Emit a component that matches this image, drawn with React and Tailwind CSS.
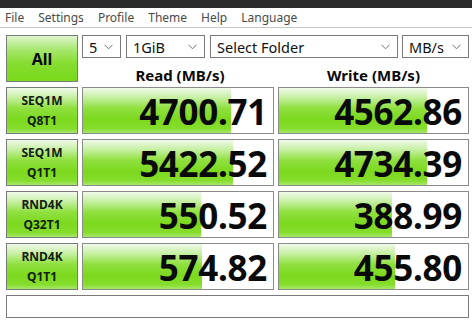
import React from "react";

const rows = [
  { a: "SEQ1M", b: "Q8T1", read: "4700.71", write: "4562.86", rf: 0.78, wf: 0.783 },
  { a: "SEQ1M", b: "Q1T1", read: "5422.52", write: "4734.39", rf: 0.79, wf: 0.783 },
  { a: "RND4K", b: "Q32T1", read: "550.52", write: "388.99", rf: 0.62, wf: 0.6 },
  { a: "RND4K", b: "Q1T1", read: "574.82", write: "455.80", rf: 0.625, wf: 0.615 },
];

const green =
  "bg-[linear-gradient(to_bottom,#f1f9ea_0%,#c4efa0_22%,#8fe03e_45%,#7cd91e_70%,#86dd2c_90%,#a6e86a_100%)]";

function Chevron() {
  return (
    <svg width="9" height="6" viewBox="0 0 9 6" className="shrink-0">
      <path d="M0.5 0.8 L4.5 4.8 L8.5 0.8" fill="none" stroke="#707070" strokeWidth="1" />
    </svg>
  );
}

function Combo({ label, width }) {
  return (
    <div
      className="h-[23px] border border-[#7a7a7a] bg-white flex items-center justify-between pl-[6px] pr-[7px] text-[14.5px] text-[#111]"
      style={{ width }}
    >
      <span className="leading-[20px]">{label}</span>
      <Chevron />
    </div>
  );
}

function ValueBox({ value, frac }) {
  return (
    <div className="relative h-[47px] border border-[#8a8a8a] bg-white">
      <div className={`absolute left-0 top-0 bottom-0 ${green}`} style={{ width: `${frac * 100}%` }} />
      <div className="relative h-full flex items-center justify-end pr-[6px] pt-[3px] text-[35px] font-bold leading-[42px] text-[#0a0a0a] tracking-[-0.3px]">
        {value}
      </div>
    </div>
  );
}

export default function App() {
  return (
    <div className="w-[472px] h-[321px] bg-white overflow-hidden font-['Noto_Sans','Open_Sans',sans-serif]">
      <div className="h-[8px] bg-[#2b2b2b]" />
      <div className="h-[20px] flex items-center gap-[14px] pl-[5px] text-[12px] text-[#4a4a4a] border-b border-[#c8c8c8]">
        <span>File</span>
        <span>Settings</span>
        <span>Profile</span>
        <span>Theme</span>
        <span>Help</span>
        <span>Language</span>
      </div>
      <div className="pl-[6px] pt-[7px] flex flex-col gap-[5px]">
        <div className="flex gap-[4px]">
          <div className="w-[72px] h-[47px] border border-[#7a7a7a] flex items-center justify-center text-[16px] font-bold text-[#0a0a0a] bg-[linear-gradient(to_bottom,#dff5cc_0%,#a8e870_30%,#86dd30_60%,#78d81a_100%)]">
            All
          </div>
          <div className="flex flex-col">
            <div className="flex">
              <Combo label="5" width={39} />
              <div className="w-[5px]" />
              <Combo label="1GiB" width={79} />
              <div className="w-[5px]" />
              <Combo label="Select Folder" width={188} />
              <div className="w-[4px]" />
              <Combo label="MB/s" width={67} />
            </div>
            <div className="flex h-[24px] text-[15px] font-bold leading-[18px] text-[#0a0a0a]">
              <div className="w-[196px] text-center pt-[8px]">Read (MB/s)</div>
              <div className="w-[191px] text-center pt-[8px]">Write (MB/s)</div>
            </div>
          </div>
        </div>
        {rows.map((r, i) => (
          <div key={i} className="grid grid-cols-[72px_192px_191px] gap-x-[4px]">
            <div className={`h-[47px] border border-[#7a7a7a] ${green} flex flex-col items-center justify-center gap-[3px] text-[12px] font-bold leading-[17px] text-[#122012]`}>
              <span>{r.a}</span>
              <span>{r.b}</span>
            </div>
            <ValueBox value={r.read} frac={r.rf} />
            <ValueBox value={r.write} frac={r.wf} />
          </div>
        ))}
        <div className="w-[463px] h-[23px] border border-[#7a7a7a] bg-white" />
      </div>
    </div>
  );
}
